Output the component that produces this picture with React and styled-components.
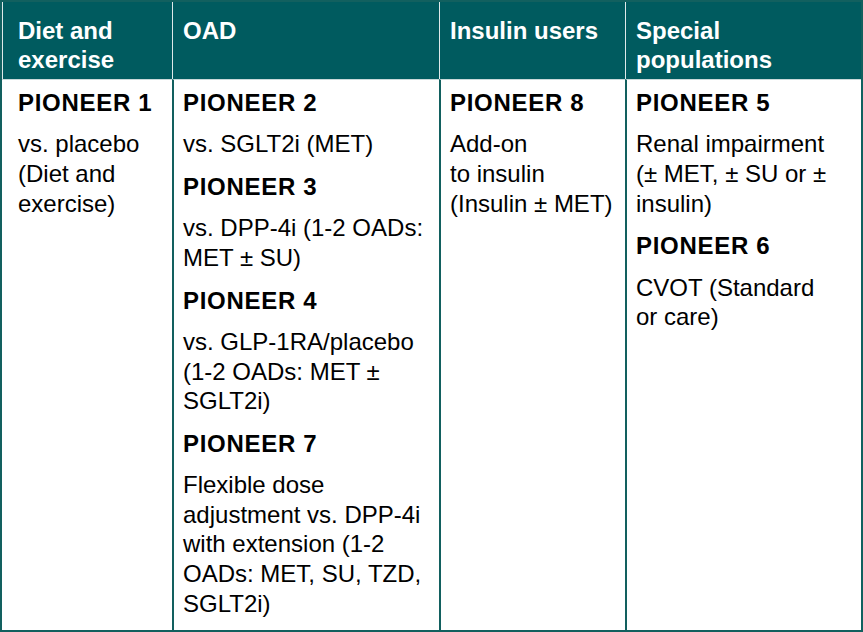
import React from "react";
import styled, { createGlobalStyle } from "styled-components";

const TEAL = "#005b5f";
const LINE = "#12605f";

const GlobalStyle = createGlobalStyle`
  html, body {
    margin: 0;
    padding: 0;
    background: #ffffff;
  }
  body {
    font-family: "Liberation Sans", Arial, sans-serif;
    color: #000;
  }
`;

const columns = [
  {
    title: ["Diet and", "exercise"],
    trials: [
      { name: "PIONEER 1", lines: ["vs. placebo", "(Diet and", "exercise)"] },
    ],
  },
  {
    title: ["OAD"],
    trials: [
      { name: "PIONEER 2", lines: ["vs. SGLT2i (MET)"] },
      { name: "PIONEER 3", lines: ["vs. DPP-4i (1-2 OADs:", "MET ± SU)"] },
      {
        name: "PIONEER 4",
        lines: ["vs. GLP-1RA/placebo", "(1-2 OADs: MET ±", "SGLT2i)"],
      },
      {
        name: "PIONEER 7",
        lines: [
          "Flexible dose",
          "adjustment vs. DPP-4i",
          "with extension (1-2",
          "OADs: MET, SU, TZD,",
          "SGLT2i)",
        ],
      },
    ],
  },
  {
    title: ["Insulin users"],
    trials: [
      { name: "PIONEER 8", lines: ["Add-on", "to insulin", "(Insulin ± MET)"] },
    ],
  },
  {
    title: ["Special", "populations"],
    trials: [
      {
        name: "PIONEER 5",
        lines: ["Renal impairment", "(± MET, ± SU or ±", "insulin)"],
      },
      { name: "PIONEER 6", lines: ["CVOT (Standard", "or care)"] },
    ],
  },
];

const withBreaks = (lines) =>
  lines.map((l, j) => (
    <React.Fragment key={j}>
      {j > 0 && <br />}
      {l}
    </React.Fragment>
  ));

export default function App() {
  return (
    <>
      <GlobalStyle />
      <Table>
        {columns.map((col, i) => (
          <HeadCell key={"h" + i} $first={i === 0}>
            {withBreaks(col.title)}
          </HeadCell>
        ))}
        {columns.map((col, i) => (
          <BodyCell key={"b" + i} $first={i === 0}>
            {col.trials.map((trial) => (
              <Trial key={trial.name}>
                <TrialName>{trial.name}</TrialName>
                <TrialText>{withBreaks(trial.lines)}</TrialText>
              </Trial>
            ))}
          </BodyCell>
        ))}
      </Table>
    </>
  );
}

const Table = styled.div`
  box-sizing: border-box;
  width: 863px;
  height: 632px;
  border: 2px solid ${LINE};
  display: grid;
  grid-template-columns: 170px 267px 186px 236px;
  grid-template-rows: 78px 1fr;
`;

const HeadCell = styled.div`
  box-sizing: border-box;
  padding: 13.5px 4px 0 ${(p) => (p.$first ? "16px" : "9px")};
  border-left: ${(p) => (p.$first ? "0" : "2px solid transparent")};
  border-bottom: 1px solid #c9d9d9;
  background: linear-gradient(90deg, #dfe9e9 0 1px, ${TEAL} 1px) border-box;
  background-color: ${TEAL};
  color: #fff;
  font-weight: 700;
  font-size: 24px;
  line-height: 29.4px;
  white-space: nowrap;
`;

const BodyCell = styled.div`
  box-sizing: border-box;
  padding: 8px 2px 0 ${(p) => (p.$first ? "16px" : "9px")};
  border-left: ${(p) => (p.$first ? "0" : `2px solid ${LINE}`)};
  display: flex;
  flex-direction: column;
  gap: 13px;
`;

const Trial = styled.div`
  display: flex;
  flex-direction: column;
  gap: 12px;
`;

const TrialName = styled.div`
  font-weight: 700;
  font-size: 24px;
  line-height: 29.4px;
  letter-spacing: 0.7px;
  white-space: nowrap;
`;

const TrialText = styled.div`
  font-size: 24px;
  line-height: 29.6px;
  white-space: nowrap;
`;
